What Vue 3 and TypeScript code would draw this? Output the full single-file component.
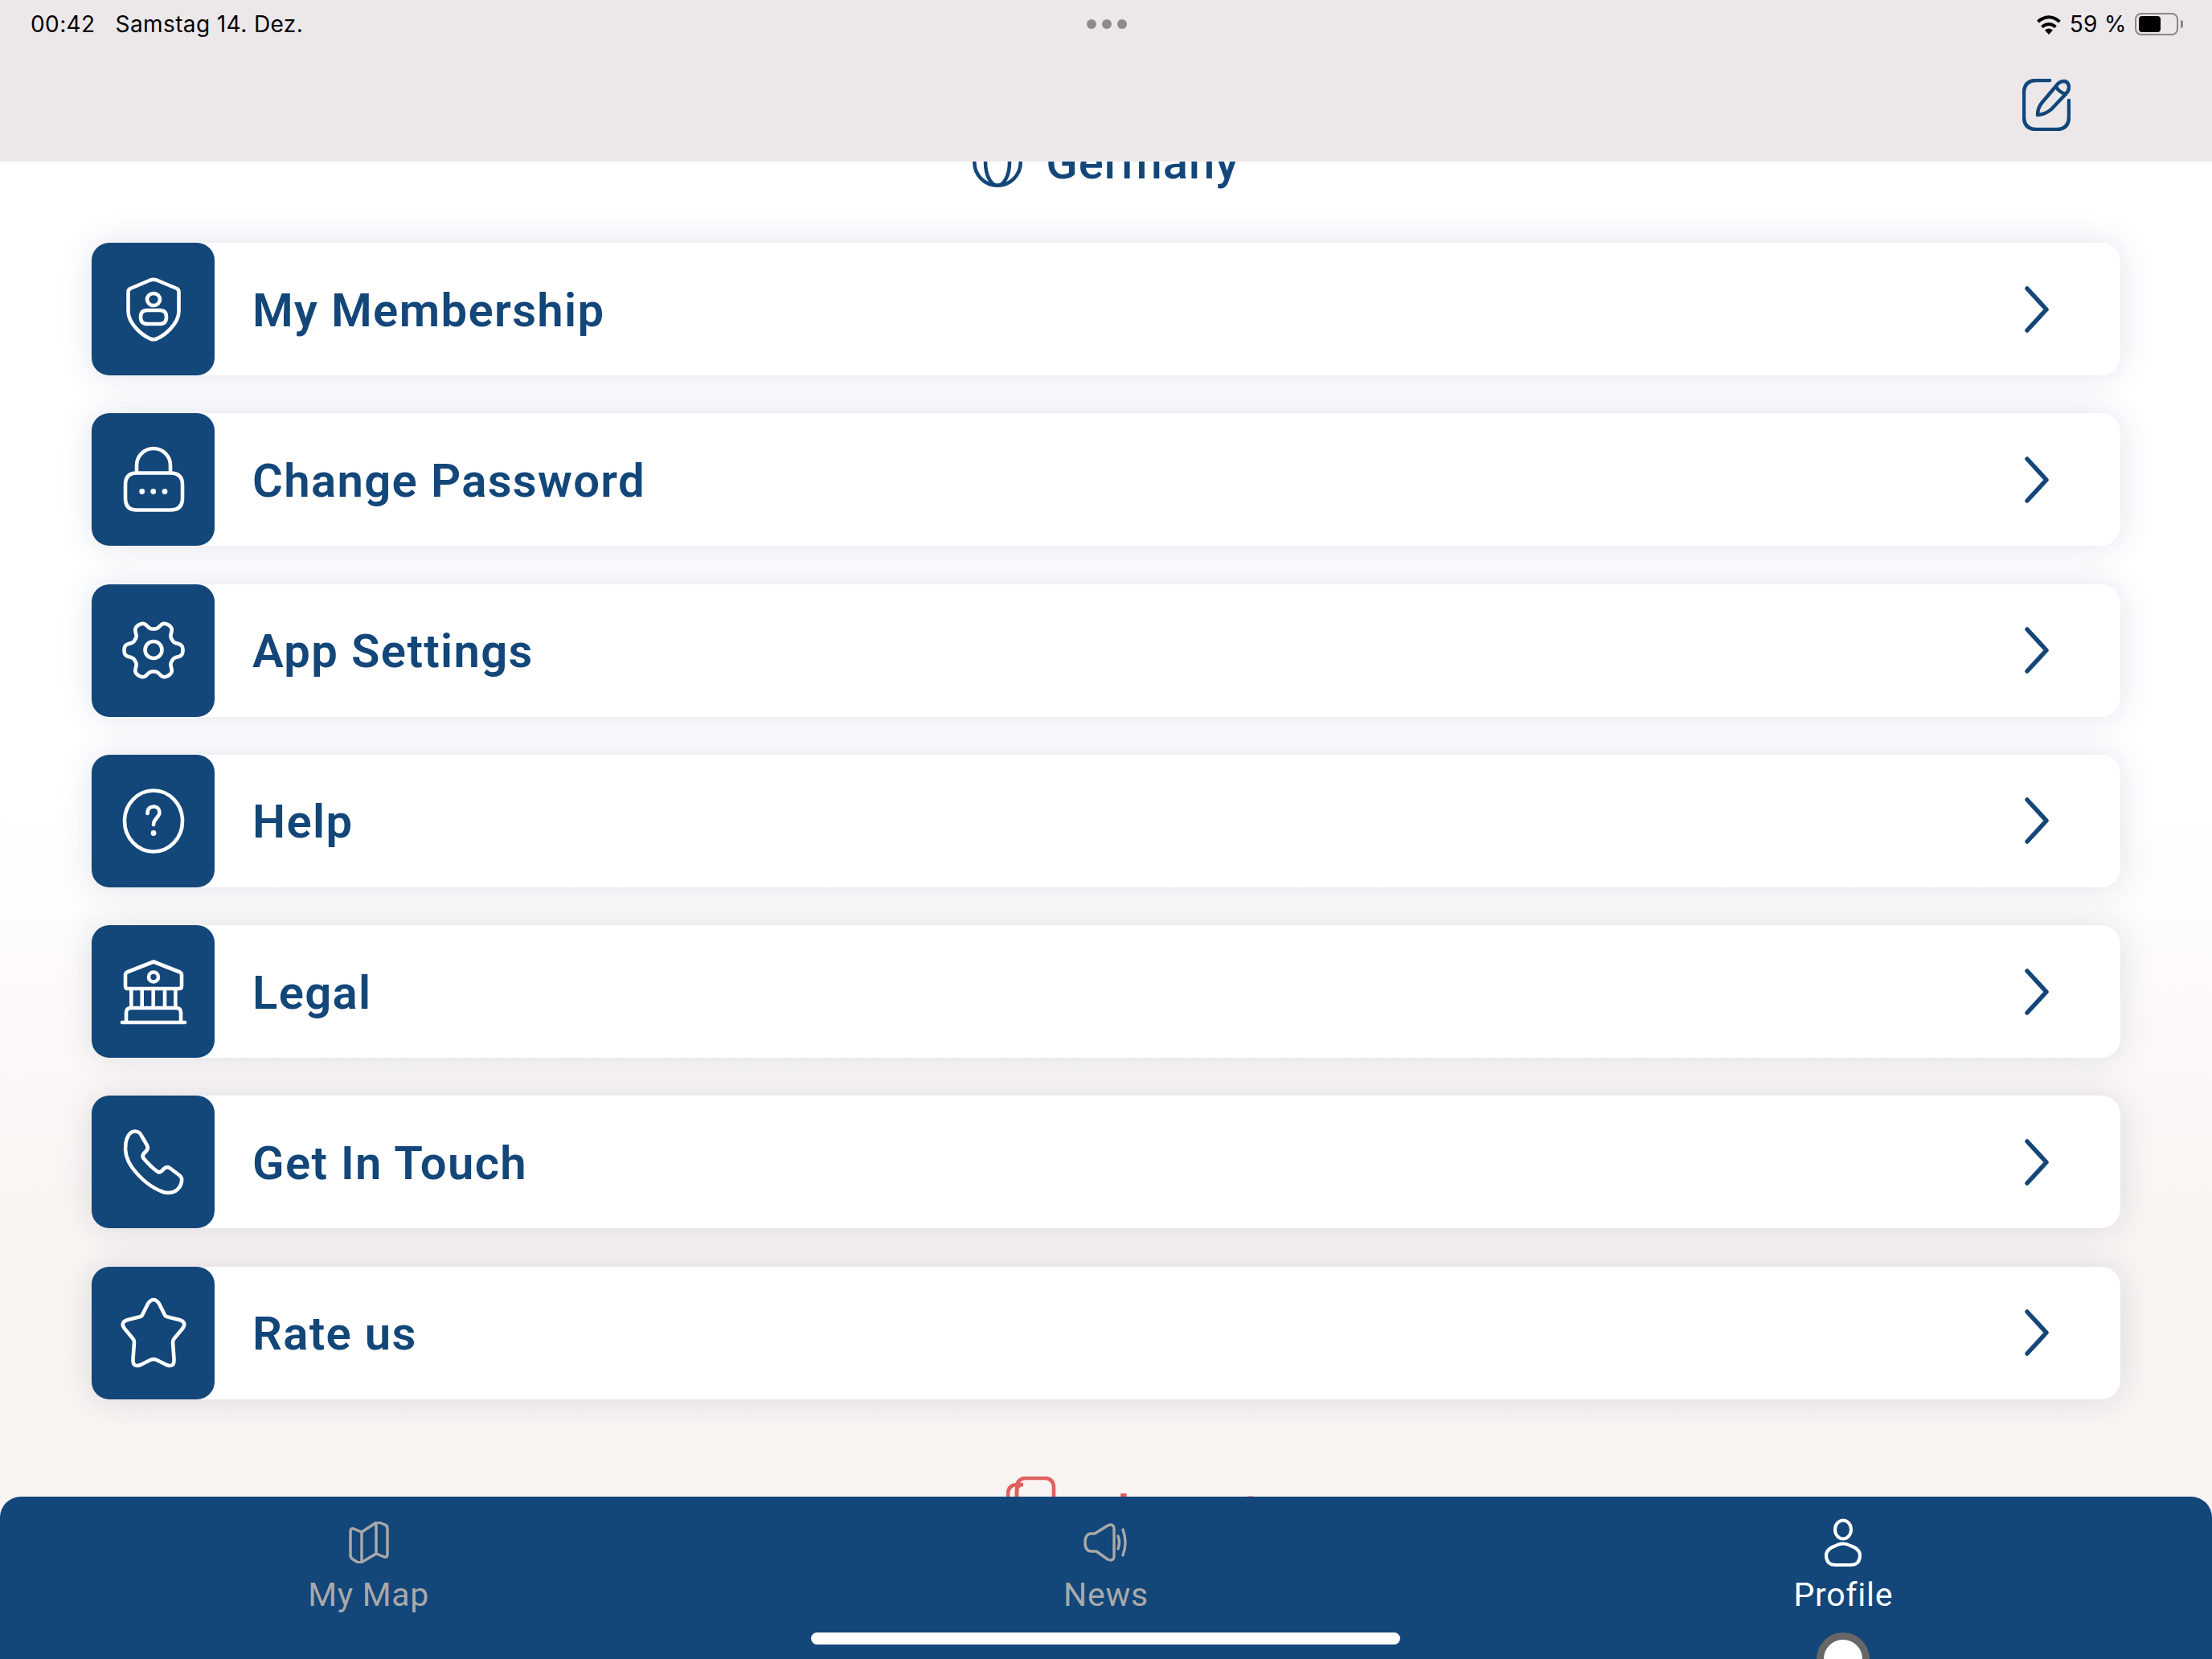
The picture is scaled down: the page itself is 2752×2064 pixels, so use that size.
<template>
  <div class="page">
    <header class="topbar">
      <div class="status">
        <div class="status-left">
          <span>00:42</span>
          <span>Samstag 14. Dez.</span>
        </div>
        <div class="dots"><i></i><i></i><i></i></div>
        <div class="status-right">
          <svg class="wifi" width="32" height="26" viewBox="0 0 32 26">
            <path d="M16 26 L11 20.5 Q16 16.5 21 20.5 Z" fill="#000" />
            <path d="M7.5 16.5 Q16 9.5 24.5 16.5" fill="none" stroke="#000" stroke-width="4" />
            <path d="M2.5 10 Q16 -1.5 29.5 10" fill="none" stroke="#000" stroke-width="4" />
          </svg>
          <span class="pct">59 %</span>
          <div class="battery">
            <div class="battery-fill"></div>
          </div>
        </div>
      </div>
      <div class="actions">
        <svg width="60" height="65" viewBox="0 0 60 65" fill="none" stroke="#134679" stroke-width="4.5" stroke-linecap="round" stroke-linejoin="round">
          <path d="M34 2 H18 Q2 2 2 18 V47 Q2 63 18 63 H42 Q58 63 58 47 V27" />
          <path d="M19 45 Q19 36 25 29 L42 9 Q46 3 52 3 Q58 4 58 11 Q58 15 54 19 L37 37 Q30 44 19 45Z" />
          <path d="M42 10 Q46 17 54 19" />
        </svg>
      </div>
    </header>

    <main class="content">
      <div class="country">
        <svg width="62" height="62" viewBox="0 0 62 62" fill="none" stroke="#134679" stroke-width="4.5">
          <circle cx="31" cy="31" r="28.7" />
          <ellipse cx="31" cy="31" rx="15" ry="28.7" />
        </svg>
        <span>Germany</span>
      </div>

      <section class="menu">
        <div v-for="item in items" :key="item.label" class="card">
          <div class="tile">
            <svg class="tile-icon" width="80" height="80" viewBox="0 0 80 80" fill="none" stroke="#fff" stroke-width="4.6" stroke-linecap="round" stroke-linejoin="round">
              <path v-for="d in item.paths" :key="d" :d="d" />
              <circle v-for="c in item.dots" :key="c[0] + '-' + c[1]" :cx="c[0]" :cy="c[1]" r="3.4" fill="#fff" stroke="none" />
            </svg>
          </div>
          <span class="card-label">{{ item.label }}</span>
          <svg class="chevron" width="30" height="58" viewBox="0 0 30 58" fill="none" stroke="#134679" stroke-width="5.5" stroke-linecap="round" stroke-linejoin="round">
            <path d="M3 3 L27 29 L3 55" />
          </svg>
        </div>
      </section>

      <div class="logout">
        <svg width="62" height="70" viewBox="0 0 62 70" fill="none" stroke="#e0605f" stroke-width="4.5">
          <path d="M13 68 V18 Q13 10 21 10 H14 Q2 10 2 22 V68" />
          <path d="M13 68 V14 Q13 2 25 2 H47 Q59 2 59 14 V68" />
        </svg>
        <span>Logout</span>
      </div>
    </main>

    <nav class="tabbar">
      <div v-for="tab in tabs" :key="tab.label" class="tab" :class="{ active: tab.active }">
        <div class="tab-icon">
          <svg :width="tab.w" :height="tab.h" :viewBox="`0 0 ${tab.w} ${tab.h}`" fill="none" stroke="currentColor" :stroke-width="tab.stroke" stroke-linecap="round" stroke-linejoin="round">
            <path v-for="d in tab.paths" :key="d" :d="d" />
          </svg>
        </div>
        <span>{{ tab.label }}</span>
      </div>
      <div class="home-indicator"></div>
      <div class="profile-dot"></div>
    </nav>
  </div>
</template>

<script setup lang="ts">
interface MenuItem {
  label: string;
  paths: string[];
  dots?: number[][];
}

interface Tab {
  label: string;
  w: number;
  h: number;
  stroke: number;
  active?: boolean;
  paths: string[];
}

// six lobes, notch on top. sampled from polar coords
function gearPath(): string {
  const pts: string[] = [];
  for (let i = 0; i < 180; i++) {
    const a = (i / 180) * Math.PI * 2;
    const t = Math.tanh(1.6 * Math.cos(6 * a)) / Math.tanh(1.6);
    const r = 31.5 + 5 * t;
    pts.push(`${(40 + r * Math.cos(a)).toFixed(2)} ${(40 + r * Math.sin(a)).toFixed(2)}`);
  }
  return "M" + pts.join(" L") + "Z";
}

const items: MenuItem[] = [
  {
    label: "My Membership",
    paths: [
      "M36 3.5 L11 14 Q8.5 15.5 8.5 18 V42 C8.5 58 26 72 36 76.5 Q40 78 44 76.5 C54 72 71.5 58 71.5 42 V18 Q71.5 15.5 69 14 L44 3.5 Q40 2 36 3.5Z",
      "M32 27.5 A8 7.5 0 1 1 48 27.5 A8 7.5 0 1 1 32 27.5Z",
      "M32 41 H48 Q56 41 56 49.5 Q56 58 48 58 H32 Q24 58 24 49.5 Q24 41 32 41Z",
    ],
  },
  {
    label: "Change Password",
    paths: [
      "M19 31.5 H61 Q76 31.5 76 46 V63 Q76 77.5 61 77.5 H19 Q5 77.5 5 63 V46 Q5 31.5 19 31.5Z",
      "M19 31 V22 A21 21 0 0 1 61 22 V31",
    ],
    dots: [
      [25.7, 54.5],
      [39.7, 54.5],
      [54, 54.5],
    ],
  },
  {
    label: "App Settings",
    paths: [gearPath(), "M29.5 39.5 A10.5 10.5 0 1 1 50.5 39.5 A10.5 10.5 0 1 1 29.5 39.5Z"],
  },
  {
    label: "Help",
    paths: [
      "M4 40.5 A36 38 0 1 1 76 40.5 A36 38 0 1 1 4 40.5Z",
      "M32.5 31 C32.5 25 36 22.5 40 22.5 C45 22.5 47.5 26 47.5 30 C47.5 36 40 37 40 45",
    ],
    dots: [[40, 55.5]],
  },
  {
    label: "Legal",
    paths: [
      "M40 2.5 L7 15.5 Q5 16.5 5 19 V33 Q5 36 8 36 H72 Q75 36 75 33 V19 Q75 16.5 73 15.5 Z",
      "M34 21.5 A6 6 0 1 1 46 21.5 A6 6 0 1 1 34 21.5Z",
      "M12.3 36 V60",
      "M25.7 36 V60",
      "M39.7 36 V60",
      "M54 36 V60",
      "M67.3 36 V60",
      "M6 77 V66 Q6 60 12 60 H68 Q74 60 74 66 V77",
      "M1 78 H79",
    ],
  },
  {
    label: "Get In Touch",
    paths: [
      "M12 3 Q17 0 22 3 Q24 4.5 25 7 L32 19 Q34 23 31 26 L28 29 Q25.5 32 27.5 35 Q36 45 44 51 Q47 53.5 50 51 L53 48 Q56.5 45 60 47 L72 56 Q76 59 75 64 Q73.5 72 67 76 Q60 79.5 52 77 Q30 69 13 46 Q3 32 5.5 16 Q7 7 12 3Z",
    ],
  },
  {
    label: "Rate us",
    paths: [
      "M33 4 Q40 -6 47 4 L54 18 Q55 20 58 20.5 L72 24 Q82 27 76 35 L66 47 Q64 49 64 52 L65.5 73 Q66 84 56 80 L44 74 Q40 72 36 74 L24 80 Q14 84 14.5 73 L16 52 Q16 49 14 47 L4 35 Q-2 27 8 24 L22 20.5 Q25 20 26 18 Z",
    ],
  },
];

const tabs: Tab[] = [
  {
    label: "My Map",
    w: 50,
    h: 52,
    stroke: 3.5,
    paths: [
      "M2 12 Q2 8 6 9 L16 13 L33 2 Q36 0 40 2 L45 4 Q48 5 48 9 V41 Q48 45 44 44 L34 40 L17 50 Q14 52 10 50 L5 47 Q2 45 2 42Z",
      "M16 13 V49",
      "M34 2 V40",
    ],
  },
  {
    label: "News",
    w: 56,
    h: 48,
    stroke: 3.4,
    paths: [
      "M10 13 H14 L30 3 Q37 0 38 6 V42 Q37 48 30 45 L16 35 H10 Q2 35 2 24 Q2 13 10 13Z",
      "M43 16 Q46 24 43 32",
      "M49 8 Q55 24 49 40",
    ],
  },
  {
    label: "Profile",
    w: 46,
    h: 60,
    stroke: 4,
    active: true,
    paths: [
      "M13 14 A10 11.5 0 1 1 33 14 A10 11.5 0 1 1 13 14Z",
      "M14 34 Q23 29 32 34 Q44 38 44 46 Q44 58 32 58 H14 Q2 58 2 46 Q2 38 14 34Z",
    ],
  },
];
</script>

<style>
body {
  margin: 0;
}
</style>

<style scoped>
.page {
  width: 2752px;
  height: 2064px;
  display: flex;
  flex-direction: column;
  overflow: hidden;
  font-family: Roboto, "Noto Sans", sans-serif;
  background: linear-gradient(180deg, #ffffff 0%, #ffffff 48%, #faf4f2 72%, #f9f3f1 100%);
}

.topbar {
  height: 201px;
  flex-shrink: 0;
  background: #ece8ea;
}
.status {
  height: 60px;
  display: grid;
  grid-template-columns: 1fr auto 1fr;
  align-items: center;
  padding: 0 35px 0 38px;
  color: #000;
  font-family: Inter, sans-serif;
  font-size: 28px;
  letter-spacing: 0.4px;
}
.status-left {
  display: flex;
  gap: 25px;
}
.dots {
  display: flex;
  gap: 7px;
  margin-left: -2px;
}
.dots i {
  width: 12px;
  height: 12px;
  border-radius: 50%;
  background: #8e8b8f;
}
.status-right {
  display: flex;
  align-items: center;
  justify-content: flex-end;
  gap: 10px;
}
.battery {
  position: relative;
  width: 54px;
  height: 28px;
  box-sizing: border-box;
  border: 2px solid #8a8789;
  border-radius: 8px;
  padding: 2px 3px;
  margin-right: 7px;
}
.battery::after {
  content: "";
  position: absolute;
  right: -8px;
  top: 7px;
  width: 3px;
  height: 10px;
  border-radius: 0 3px 3px 0;
  background: #8a8789;
}
.battery-fill {
  width: 27px;
  height: 100%;
  border-radius: 4px;
  background: #000;
}
.actions {
  display: flex;
  justify-content: flex-end;
  padding: 38px 176px 0 0;
}

.content {
  flex: 1;
  min-height: 0;
  overflow: hidden;
}
.country {
  height: 62px;
  margin-top: -30px;
  display: flex;
  align-items: center;
  justify-content: center;
  gap: 29px;
  color: #134679;
  font-size: 58px;
  font-weight: 500;
  letter-spacing: 1px;
}
.menu {
  display: flex;
  flex-direction: column;
  gap: 47.3px;
  margin: 69px 114px 0;
}
.card {
  height: 165px;
  display: flex;
  align-items: center;
  background: #fff;
  border-radius: 24px;
  box-shadow: 0 0 40px rgba(30, 60, 120, 0.14);
}
.tile {
  width: 153px;
  height: 100%;
  flex-shrink: 0;
  display: flex;
  align-items: center;
  justify-content: center;
  background: #134679;
  border-radius: 22px;
}
.tile-icon {
  overflow: visible;
}
.card-label {
  flex: 1;
  margin: 2px 0 0 47px;
  color: #134679;
  font-size: 58px;
  font-weight: 600;
  letter-spacing: 1.35px;
}
.chevron {
  margin-right: 89px;
}
.logout {
  display: flex;
  align-items: flex-start;
  justify-content: center;
  gap: 76px;
  margin-top: 96px;
  padding-left: 66px;
  color: #e0605f;
  font-size: 56px;
  font-weight: 600;
  line-height: 68px;
}
.logout span {
  margin-top: 8px;
}

.tabbar {
  position: relative;
  height: 202px;
  flex-shrink: 0;
  box-sizing: border-box;
  padding-top: 25px;
  display: grid;
  grid-template-columns: repeat(3, 1fr);
  overflow: hidden;
  background: #134679;
  border-radius: 26px 26px 0 0;
}
.tab {
  display: flex;
  flex-direction: column;
  align-items: center;
  color: #a9a9a9;
  font-size: 41px;
  line-height: 48px;
  letter-spacing: 0.7px;
}
.tab.active {
  color: #fff;
}
.tab-icon {
  height: 64px;
  display: flex;
  align-items: center;
  margin-bottom: 9px;
}
.home-indicator {
  position: absolute;
  left: 1009px;
  top: 169px;
  width: 733px;
  height: 15px;
  border-radius: 8px;
  background: #fff;
}
.profile-dot {
  position: absolute;
  left: 2260px;
  top: 169px;
  width: 66px;
  height: 66px;
  box-sizing: border-box;
  border: 9px solid #676767;
  border-radius: 50%;
  background: #fff;
}
</style>
